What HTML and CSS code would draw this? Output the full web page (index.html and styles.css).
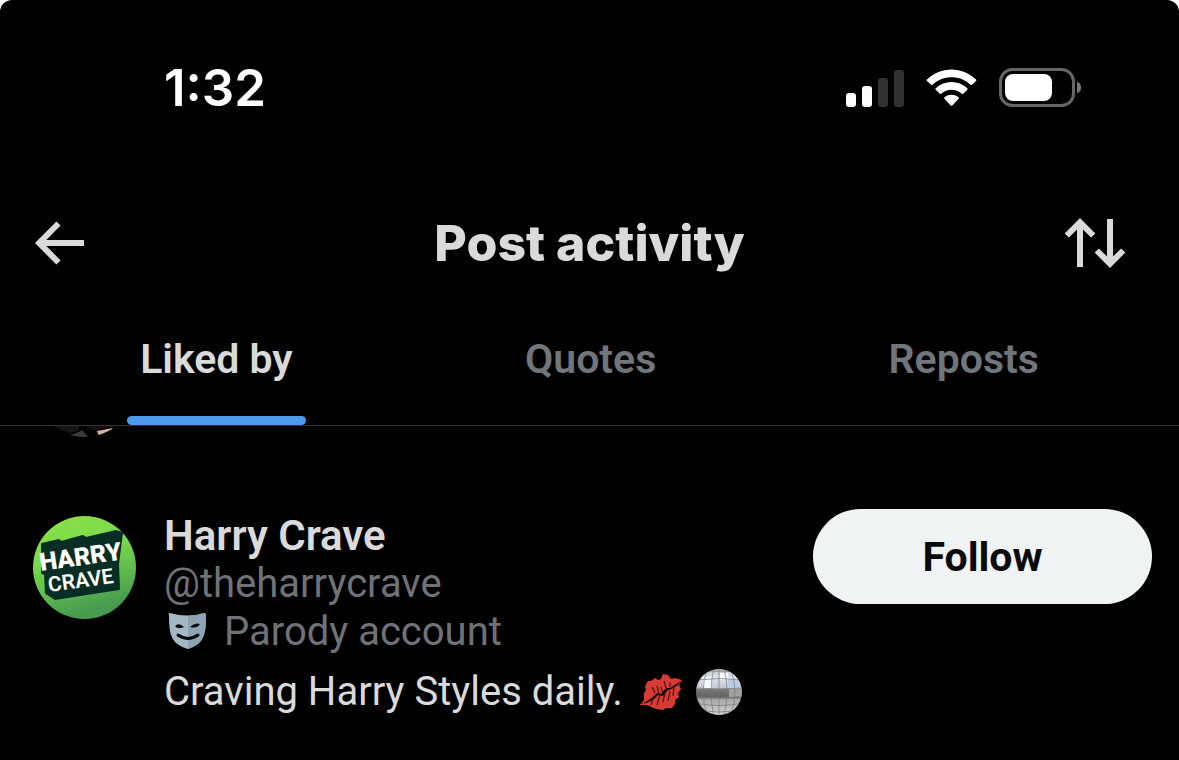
FILE: index.html
```html
<!DOCTYPE html>
<html lang="en">
<head>
<meta charset="utf-8">
<meta name="viewport" content="width=device-width, initial-scale=1">
<title>Post activity</title>
<link rel="stylesheet" href="styles.css">
</head>
<body>
<main class="screen">
  <div class="status">
    <time class="clock">1:32</time>
    <div class="status-icons">
      <svg width="58" height="37" viewBox="0 0 58 37" role="img" aria-label="Signal">
        <rect x="0" y="23" width="10" height="14" rx="3" fill="#fff"/>
        <rect x="16" y="16" width="10" height="21" rx="3" fill="#fff"/>
        <rect x="32" y="8" width="10" height="29" rx="3" fill="#323232"/>
        <rect x="48" y="0" width="10" height="37" rx="3" fill="#323232"/>
      </svg>
      <svg width="51" height="38" viewBox="0.500 0 51 38" role="img" aria-label="Wi-Fi">
        <g fill="#fff">
          <path d="M1.500 10.500C15-3 37-3 50.500 10.500Q51.200 11.200 50.500 12L46.500 15.800Q45.800 16.400 45 15.700C34.500 5.800 17.500 5.800 7 15.700Q6.200 16.400 5.500 15.800L1.500 12Q.8 11.200 1.500 10.500Z"/>
          <path d="M10.200 19.300C19 11 33 11 41.800 19.300Q42.500 20 41.800 20.700L37.700 24.700Q37 25.300 36.300 24.700C30.500 19.500 21.500 19.500 15.700 24.700Q15 25.300 14.300 24.700L10.200 20.700Q9.500 20 10.200 19.300Z"/>
          <path d="M19 28.300C23 25 29 25 33 28.300Q33.800 29 33.100 29.700L26.800 36.400Q26 37.100 25.200 36.400L18.900 29.700Q18.200 29 19 28.300Z"/>
        </g>
      </svg>
      <svg width="83" height="40" viewBox="0 0 83 40" role="img" aria-label="Battery">
        <rect x="1.500" y="1.500" width="73" height="36" rx="12" fill="none" stroke="#666" stroke-width="3"/>
        <rect x="6" y="6" width="47" height="27" rx="8" fill="#fff"/>
        <path d="M78 13.500Q82 15 82 19.500T78 25.500Z" fill="#777"/>
      </svg>
    </div>
  </div>

  <header class="header">
    <button class="icon-button" type="button" aria-label="Back">
      <svg width="50" height="50" viewBox="0 0 50 50" fill="none" stroke="#dadada" stroke-width="6">
        <path d="M24.500 5.500L5.200 25L24.500 44.500M5.500 25H50"/>
      </svg>
    </button>
    <h1 class="title">Post activity</h1>
    <button class="icon-button sort" type="button" aria-label="Sort">
      <svg width="62" height="50" viewBox="0 0 62 50" fill="none" stroke="#dadada" stroke-width="6">
        <path d="M2.800 17.500L16 4.300L29.200 17.500M16 5V49M46 1V45M32.800 32.500L46 45.700L59.200 32.500"/>
      </svg>
    </button>
  </header>

  <nav class="tabs">
    <button class="tab tab-active" type="button">Liked by</button>
    <button class="tab" type="button">Quotes</button>
    <button class="tab" type="button">Reposts</button>
  </nav>

  <section class="list">
    <svg class="avatar-end" width="103" height="11" viewBox="0 92 103 11" aria-hidden="true">
      <clipPath id="round"><circle cx="51.500" cy="51.500" r="51.500"/></clipPath>
      <g clip-path="url(#round)">
        <path d="M20 92H46V97L36 99Z" fill="#151515"/>
        <path d="M36 101Q45 99 49 96L55 103H36Z" fill="#3b3b3b"/>
        <path d="M52 92H82L60 96Z" fill="#18100e"/>
        <path d="M64 97L80 94L78 98L66 102Z" fill="#d8b1a0"/>
      </g>
    </svg>
    <article class="person">
      <svg class="avatar" width="103" height="103" viewBox="0 0 103 103" role="img" aria-label="Harry Crave">
        <defs>
          <linearGradient id="green" x1="0" y1="0" x2=".3" y2="1"><stop offset="0" stop-color="#8dde48"/><stop offset=".45" stop-color="#79dc4a"/><stop offset="1" stop-color="#459b50"/></linearGradient>
        </defs>
        <circle cx="51.500" cy="51.500" r="51.500" fill="url(#green)"/>
        <path d="M9 28L26 24L28 26L50 20L53 22L83 15L89 17L85 48L86 73L22 83L13 77L12 58L9 57Z" fill="#082d25" stroke="#082d25" stroke-width="2" stroke-linejoin="round"/>
        <g transform="rotate(-8 50 45)" fill="#fff">
          <text class="logo-top" x="48" y="49" text-anchor="middle">HARRY</text>
          <text class="logo-bottom" x="45" y="71" text-anchor="middle">CRAVE</text>
        </g>
      </svg>
      <div class="details">
        <h2 class="name">Harry Crave</h2>
        <p class="muted">@theharrycrave</p>
        <p class="muted label">
          <svg class="mask" width="46" height="40" viewBox="0 0 46 40" aria-hidden="true">
            <path d="M6 1Q24 6 40 1Q42 1 42 4C42 24 39 32 24 37C8 32 5 24 5 4Q4 1 6 1Z" fill="#a3b7c4"/>
            <path d="M24 4Q32 4 40 1Q42 1 42 4C42 24 39 32 24 37Z" fill="#8da3b2"/>
            <path d="M11 14Q15 10 20 15Q14 18 11 14ZM26 15Q31 10 36 12Q33 17 26 15Z" fill="#05090c"/>
            <path d="M14 23Q24 30 34 23" fill="none" stroke="#05090c" stroke-width="3" stroke-linecap="round"/>
          </svg>
          <span>Parody account</span>
        </p>
        <p class="bio">
          <span>Craving Harry Styles daily.</span>
          <svg class="lips" width="44" height="38" viewBox="0 0 44 38" role="img" aria-label="Kiss mark">
            <path d="M1 32L5 27L5 20L7 17L6 13L9 8L12 8L16 5L19 7L22 6L24 1L29 2L32 6L36 5L43 7L40 12L42 16L39 20L40 24L36 27L36 31L33 35L27 35L24 37L17 36L8 32Z" fill="#d73b34"/>
            <path d="M2 31Q12 27 18 20L22 21L27 15L31 15L42 8Q36 16 29 17L24 23L19 22Q14 29 2 31Z" fill="#170806"/>
            <path d="M13 14L16 20M18 13L20 21M12 32L14 26M18 32L21 22M24 29L26 20M29 28L31 18M34 23L35 15M25 8L27 15M31 9L31 14M22 14L24 20" stroke="#4b100e" stroke-width="1.200"/>
          </svg>
          <svg width="48" height="48" viewBox="0 0 48 48" role="img" aria-label="Mirror ball">
            <defs><clipPath id="ball"><circle cx="24" cy="24" r="23"/></clipPath>
            <linearGradient id="silver" x1="0" y1="0" x2="0" y2="1"><stop offset="0" stop-color="#b9bdc4"/><stop offset=".2" stop-color="#e0e5ed"/><stop offset=".42" stop-color="#c2c8d1"/><stop offset=".45" stop-color="#777"/><stop offset=".6" stop-color="#626262"/><stop offset=".66" stop-color="#aaa"/><stop offset="1" stop-color="#d7d7d7"/></linearGradient></defs>
            <g clip-path="url(#ball)">
              <path d="M0 0H48V48H0Z" fill="url(#silver)"/>
              <path d="M8 9H17V20H8ZM25 5H33V12H25Z" fill="#f4f8ff"/><path d="M33 12H45V20H33Z" fill="#b9cce6"/><path d="M34 21H48V29H34Z" fill="#a1a1a1"/>
              <path d="M0 5Q24 1 48 5M0 12Q24 9 48 12M0 20Q24 22 48 20M0 28Q24 32 48 28M0 35Q24 40 48 35M0 41Q24 47 48 41M24 0V48M19 0Q13 24 19 48M13 0Q3 24 13 48M29 0Q35 24 29 48M35 0Q45 24 35 48" fill="none" stroke="#777" stroke-width=".7"/>
            </g>
          </svg>
        </p>
      </div>
      <button class="follow" type="button">Follow</button>
    </article>
  </section>
</main>
</body>
</html>
```
FILE: styles.css
```css
* { box-sizing: border-box; }
body { margin: 0; background: #fff; font-family: Roboto, "Liberation Sans", sans-serif; color: #dadada; }
h1, h2, p { margin: 0; }
button { margin: 0; padding: 0; border: 0; background: none; color: inherit; font: inherit; cursor: pointer; }
svg { display: block; flex: none; }
.screen { min-height: 100vh; background: #000; border-radius: 12px 12px 0 0; overflow: hidden; }
.status { display: flex; justify-content: space-between; align-items: center; padding: 56px 97px 0 164px; height: 120px; color: #fff; }
.clock { font: 600 51px/64px Inter, sans-serif; }
.status-icons { display: flex; align-items: center; gap: 22px; }
.header { display: grid; grid-template-columns: 1fr auto 1fr; align-items: center; padding: 91px 34px 0; }
.icon-button { justify-self: start; }
.sort { justify-self: end; margin-right: 19px; }
.title { font-family: Inter, sans-serif; font-size: 50px; line-height: 64px; font-weight: 800; }
.tabs { display: flex; justify-content: space-around; padding: 49px 24px 0; border-bottom: 1px solid #333; }
.tab { padding: 10px 13px 32px; font-size: 41px; line-height: 50px; font-weight: 600; color: #71767b; border-bottom: 9px solid transparent; }
.tab-active { color: #dadada; position: relative; }
.tab-active::after { content: ""; position: absolute; left: 0; right: 0; bottom: -9px; height: 9px; border-radius: 5px; background: #4c9aea; }
.list { padding: 0 27px 32px 33px; }
.person { display: flex; align-items: flex-start; padding-top: 72px; }
.avatar { margin: 7px 28px 0 0; }
.logo-top { font: 900 25px Roboto, sans-serif; }
.logo-bottom { font: 600 21px Roboto, sans-serif; }
.details { flex: 1; min-width: 0; padding-top: 3px; font-size: 40px; line-height: 48px; }
.name { font-size: 42px; line-height: 48px; font-weight: 600; }
.muted { color: #707276; }
.label { display: flex; align-items: center; gap: 14px; }
.bio { display: flex; align-items: center; padding-top: 12px; gap: 12px; }
.lips { margin-left: 4px; }
.follow { flex: none; width: 339px; height: 95px; border-radius: 48px; background: #eff3f4; color: #0b0b0c; font-size: 41px; font-weight: 700; }
```
